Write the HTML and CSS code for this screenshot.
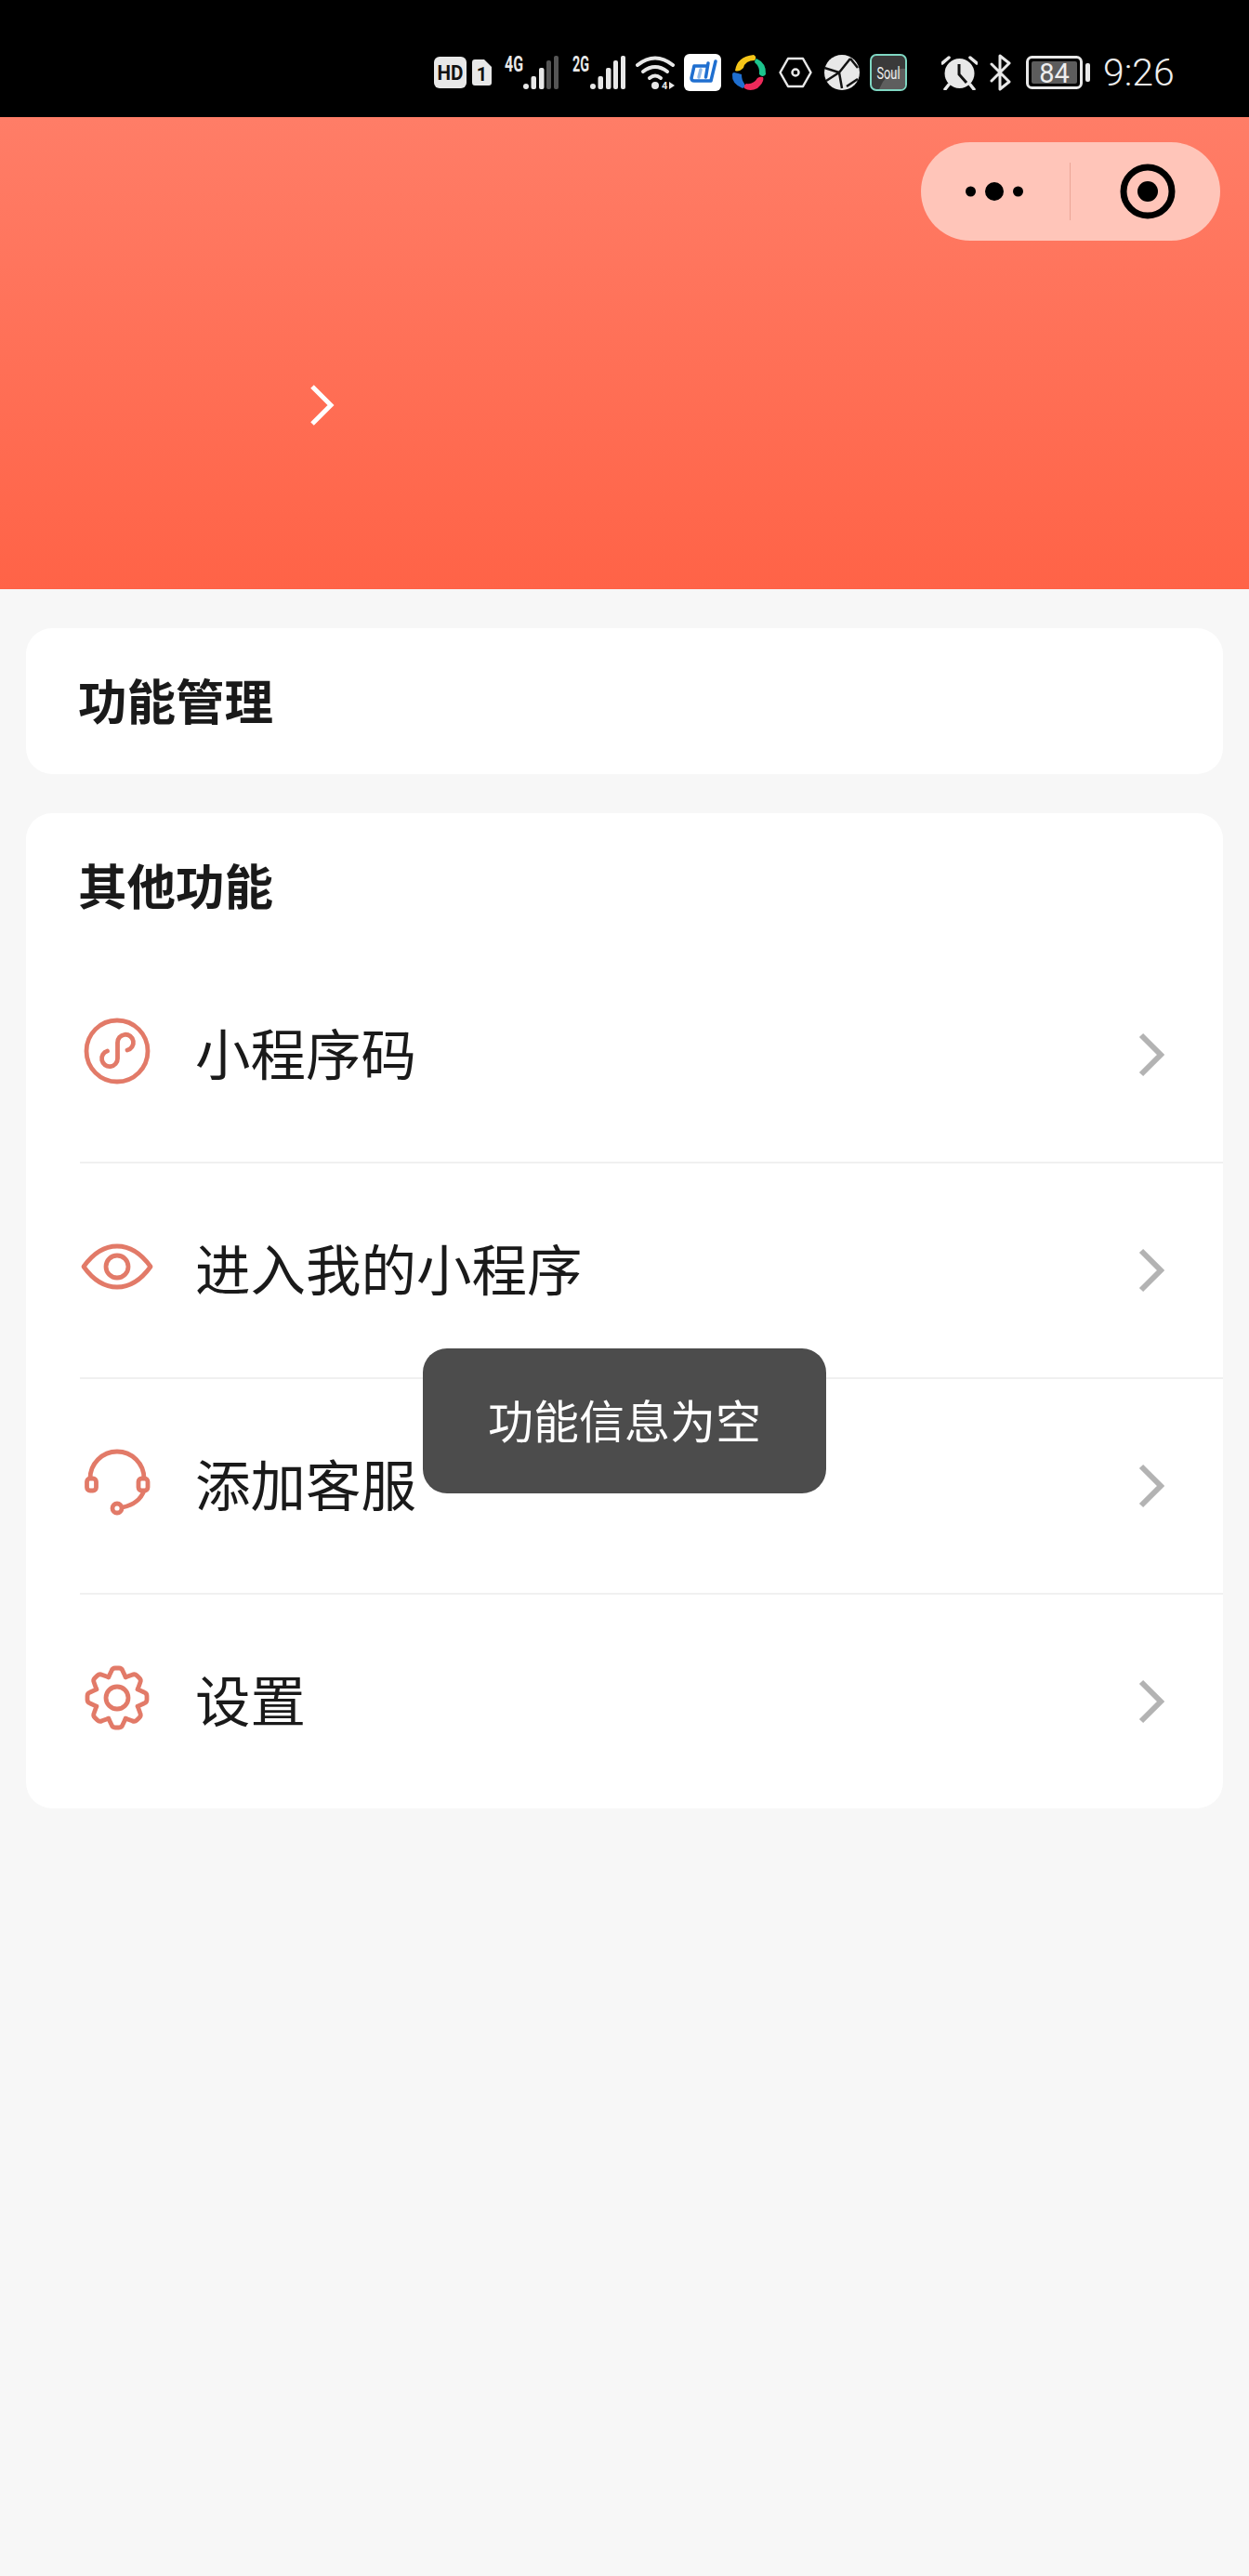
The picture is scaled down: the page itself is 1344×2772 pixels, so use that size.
FILE: index.html
```html
<!DOCTYPE html>
<html lang="zh-CN">

<head>
    <meta charset="UTF-8">
    <meta name="viewport" content="width=device-width, initial-scale=1.0">
    <title>我的</title>
    <link rel="stylesheet" href="styles.css">
</head>

<body>
    <div class="status-bar">
        <svg class="st st-hd" width="35" height="34" viewBox="0 0 35 34">
            <rect width="35" height="34" rx="6" fill="#e8e8e8" />
            <text x="17.500" y="25" text-anchor="middle" class="st-bold" font-size="22" textLength="28" lengthAdjust="spacingAndGlyphs" fill="#111">HD</text>
        </svg>
        <svg class="st st-sim" width="21" height="28" viewBox="0 0 21 28">
            <path d="M3 0h10l8 8v17a3 3 0 0 1-3 3H3a3 3 0 0 1-3-3V3a3 3 0 0 1 3-3z" fill="#e8e8e8" />
            <text x="10.500" y="23" text-anchor="middle" class="st-bold" font-size="20" fill="#111">1</text>
        </svg>
        <svg class="st st-sig" width="62" height="44" viewBox="-4 -8 62 44">
            <text x="0" y="17" class="st-bold" font-size="24" textLength="20" lengthAdjust="spacingAndGlyphs" fill="#e8e8e8">4G</text>
            <rect x="20" y="30" width="6" height="6" rx="3" fill="#e8e8e8" />
            <rect x="28.500" y="22" width="5.500" height="14" rx="2" fill="#e8e8e8" />
            <rect x="37" y="13" width="5.500" height="23" rx="2" fill="#e8e8e8" />
            <rect x="45" y="5" width="5" height="31" rx="2" fill="#555" />
            <rect x="53" y="0" width="5" height="36" rx="2" fill="#555" />
        </svg>
        <svg class="st st-sig2" width="61" height="44" viewBox="-4 -8 61 44">
            <text x="0" y="17" class="st-bold" font-size="24" textLength="18" lengthAdjust="spacingAndGlyphs" fill="#e8e8e8">2G</text>
            <rect x="19" y="30" width="6" height="6" rx="3" fill="#e8e8e8" />
            <rect x="27.500" y="22" width="5.500" height="14" rx="2" fill="#e8e8e8" />
            <rect x="36" y="13" width="5.500" height="23" rx="2" fill="#e8e8e8" />
            <rect x="44" y="5" width="5" height="31" rx="2" fill="#e8e8e8" />
            <rect x="52" y="0" width="5" height="36" rx="2" fill="#e8e8e8" />
        </svg>
        <svg class="st st-wifi" width="42" height="40" viewBox="0 0 42 40">
            <g fill="none" stroke="#e8e8e8" stroke-width="4" stroke-linecap="round">
                <path d="M2 10Q21-5 40 10" />
                <path d="M8 17Q21 7 34 17" />
                <path d="M15 24Q21 19 27 24" />
            </g>
            <circle cx="21" cy="32" r="4" fill="#e8e8e8" />
            <text x="28" y="36" class="st-bold" font-size="11" fill="#e8e8e8">4</text>
            <path d="M36 28l6 4-6 4z" fill="#e8e8e8" />
        </svg>
        <svg class="st st-app" width="40" height="40" viewBox="0 0 40 40">
            <rect width="40" height="40" rx="6" fill="#fff" />
            <path d="M18 17l-2 8" fill="none" stroke="#8fb8e8" stroke-width="3.500" stroke-linecap="round" />
            <path d="M11 13h13M11 13L8 26q0 3 3 3h18L34 8M26 10l-2.500 15" fill="none" stroke="#1f6fd0" stroke-width="3.500" stroke-linecap="round" stroke-linejoin="round" />
        </svg>
        <svg class="st st-ring" width="38" height="40" viewBox="0 0 38 40">
            <path d="M4 18Q6 3 24 1Q28 3 25 7Q15 7 13 15Q8 20 4 18Z" fill="#f5c518" />
            <path d="M27 5Q38 10 37 22Q34 26 30 22Q31 14 25 9Q25 6 27 5Z" fill="#1cc48d" />
            <path d="M34 25Q36 30 28 37Q20 41 14 37Q12 34 16 32Q24 33 28 26Q31 24 34 25Z" fill="#ee2a5a" />
            <path d="M3 20Q8 21 11 22Q11 28 14 32Q15 36 12 37Q0 32 1 22Q1 20 3 20Z" fill="#1f6fd0" />
        </svg>
        <svg class="st st-hex" width="36" height="34" viewBox="0 0 36 34">
            <path d="M10 2h16l8.500 15L26 32H10L1.500 17z" fill="none" stroke="#e8e8e8" stroke-width="2.500" stroke-linejoin="round" />
            <circle cx="18" cy="17" r="3.500" fill="none" stroke="#e8e8e8" stroke-width="2.500" />
        </svg>
        <svg class="st st-globe" width="38" height="38" viewBox="0 0 38 38">
            <circle cx="19" cy="19" r="19" fill="#e8e8e8" />
            <path d="M0 14l16 5 3 17M16 19L28 4M16 19L2 28M28 4l8 10M24 34l12-8" fill="none" stroke="#111" stroke-width="2.500" />
        </svg>
        <svg class="st st-soul" width="40" height="40" viewBox="0 0 40 40">
            <rect x="1" y="1" width="38" height="38" rx="6" fill="#3a3a3a" stroke="#7fd6c2" stroke-width="2" />
            <path d="M14 30Q26 14 38 16V33q0 5-5 5H10z" fill="#5e5e5e" />
            <text x="20" y="27" text-anchor="middle" class="st-text" font-size="19" textLength="25" lengthAdjust="spacingAndGlyphs" fill="#eee">Soul</text>
        </svg>
        <svg class="st st-alarm" width="39" height="38" viewBox="0 0 39 38">
            <circle cx="19.500" cy="20" r="16" fill="#e8e8e8" />
            <path d="M19 10v11l8 9" fill="none" stroke="#111" stroke-width="3" />
            <path d="M1 9l7-6M38 9l-7-6M8 32l-4 5M31 32l4 5" fill="none" stroke="#e8e8e8" stroke-width="3.500" stroke-linecap="round" />
        </svg>
        <svg class="st st-bt" width="23" height="40" viewBox="0 0 23 40">
            <path d="M2 11l19 19-10 8V2l10 8L2 29" fill="none" stroke="#e8e8e8" stroke-width="3" stroke-linecap="round" stroke-linejoin="round" />
        </svg>
        <svg class="st st-batt" width="69" height="36" viewBox="0 0 69 36">
            <rect x="1.500" y="1.500" width="58" height="33" rx="5" fill="none" stroke="#e8e8e8" stroke-width="3" />
            <rect x="6" y="6" width="49" height="24" rx="2" fill="#5c5c5c" />
            <rect x="64" y="8" width="5" height="20" rx="2" fill="#e8e8e8" />
            <text x="30.500" y="29" text-anchor="middle" class="st-text" font-size="29" fill="#eee">84</text>
        </svg>
        <div class="clock">9:26</div>
    </div>

    <header class="banner">
        <svg class="banner-arrow" width="28" height="46" viewBox="0 0 28 46">
            <path d="M4 3l20 20L4 43" fill="none" stroke="#fff" stroke-width="5" />
        </svg>
        <!-- top right capsule -->
        <div class="capsule">
            <div class="capsule-side capsule-more">
                <svg width="62" height="22" viewBox="0 0 62 22">
                    <circle cx="5.500" cy="11" r="5.500" />
                    <circle cx="31" cy="11" r="10" />
                    <circle cx="56.500" cy="11" r="5.500" />
                </svg>
            </div>
            <div class="capsule-side capsule-close">
                <svg width="60" height="60" viewBox="0 0 60 60">
                    <circle cx="30" cy="30" r="26" fill="none" stroke="#000" stroke-width="7" />
                    <circle cx="30" cy="30" r="11" />
                </svg>
            </div>
        </div>
    </header>

    <main class="content">
        <section class="card card-single">
            <h2 class="card-title">功能管理</h2>
        </section>

        <section class="card">
            <h2 class="card-title card-title-top">其他功能</h2>

            <div class="row">
                <svg class="row-icon" width="80" height="80" viewBox="0 0 80 80">
                    <circle cx="40" cy="40" r="33" />
                    <path d="M51 39a8.500 8.500 0 1 0-10.500-8v17a8.500 8.500 0 1 1-11-8" stroke-linecap="round" />
                </svg>
                <span class="row-name">小程序码</span>
                <svg class="row-arrow" width="28" height="48" viewBox="0 0 28 48">
                    <path d="M3 3l21 21L3 45" />
                </svg>
            </div>

            <div class="row">
                <svg class="row-icon" width="80" height="80" viewBox="0 0 80 80">
                    <path d="M4 40C14 26 26 18 40 18S66 26 76 40C66 54 54 62 40 62S14 54 4 40Z" stroke-linejoin="round" />
                    <circle cx="40" cy="40" r="12" />
                </svg>
                <span class="row-name">进入我的小程序</span>
                <svg class="row-arrow" width="28" height="48" viewBox="0 0 28 48">
                    <path d="M3 3l21 21L3 45" />
                </svg>
            </div>

            <div class="row">
                <svg class="row-icon" width="80" height="80" viewBox="0 0 80 80">
                    <path d="M11 36A29 29 0 0 1 69 36" />
                    <rect x="7.500" y="36" width="10" height="13" rx="3.500" />
                    <rect x="63" y="36" width="10" height="13" rx="3.500" />
                    <path d="M69 49Q64 63 46 67" />
                    <circle cx="40" cy="68" r="5" />
                </svg>
                <span class="row-name">添加客服</span>
                <svg class="row-arrow" width="28" height="48" viewBox="0 0 28 48">
                    <path d="M3 3l21 21L3 45" />
                </svg>
            </div>

            <div class="row">
                <svg class="row-icon" width="80" height="80" viewBox="0 0 80 80">
                    <!-- one tooth, repeated round the wheel -->
                    <path id="gear-tooth" d="M30.800 17.800L34 11Q35 8 38 8H42Q45 8 46 11L49.200 17.800" stroke-linejoin="round" stroke-linecap="round" />
                    <use href="#gear-tooth" transform="rotate(45 40 40)" />
                    <use href="#gear-tooth" transform="rotate(90 40 40)" />
                    <use href="#gear-tooth" transform="rotate(135 40 40)" />
                    <use href="#gear-tooth" transform="rotate(180 40 40)" />
                    <use href="#gear-tooth" transform="rotate(225 40 40)" />
                    <use href="#gear-tooth" transform="rotate(270 40 40)" />
                    <use href="#gear-tooth" transform="rotate(315 40 40)" />
                    <circle cx="40" cy="40" r="12" />
                </svg>
                <span class="row-name">设置</span>
                <svg class="row-arrow" width="28" height="48" viewBox="0 0 28 48">
                    <path d="M3 3l21 21L3 45" />
                </svg>
            </div>
        </section>
    </main>

    <div class="toast">功能信息为空</div>
</body>

</html>
```

FILE: styles.css
```css
:root {
    --bg-color: #f7f7f7;
    --text-color: #1a1a1a;
    --icon-color: #e27a68;
    --line-color: #f0f0f0;
}

* {
    box-sizing: border-box;
}

body {
    margin: 0;
    min-height: 2772px;
    position: relative;
    background-color: var(--bg-color);
    color: var(--text-color);
    font-family: "Noto Sans CJK SC", "Noto Sans", sans-serif;
}

/* status bar */
.status-bar {
    display: flex;
    align-items: center;
    height: 126px;
    padding: 30px 0 0 467px;
    background-color: #000;
}

.st {
    flex: none;
    display: block;
}

.st-bold {
    font-family: "Roboto", sans-serif;
    font-weight: 700;
}

.st-text {
    font-family: "Roboto", sans-serif;
    font-weight: 400;
}

.st-sim { margin-left: 6px; }
.st-sig { margin: -8px 0 0 10px; }
.st-sig2 { margin: -8px 0 0 11px; }
.st-wifi { margin: 0 0 -4px 11px; }
.st-app { margin-left: 10px; }
.st-ring { margin-left: 11px; }
.st-hex { margin-left: 13px; }
.st-globe { margin-left: 13px; }
.st-soul { margin-left: 11px; }
.st-alarm { margin-left: 37px; }
.st-bt { margin-left: 13px; }
.st-batt { margin-left: 16px; }

.clock {
    margin-left: 14px;
    color: #eee;
    font-family: "Roboto", sans-serif;
    font-size: 41px;
    font-weight: 300;
    line-height: 46px;
}

/* orange banner */
.banner {
    position: relative;
    height: 508px;
    padding: 287px 0 0 332px;
    background: linear-gradient(180deg, #ff7d67 0%, #ff6347 100%);
}

.banner-arrow {
    display: block;
}

.capsule {
    position: absolute;
    top: 27px;
    left: 991px;
    display: flex;
    width: 322px;
    height: 106px;
    border-radius: 53px;
    background-color: #ffc5b9;
}

.capsule-side {
    display: flex;
    align-items: center;
    justify-content: center;
    height: 100%;
}

.capsule-more {
    width: 161px;
    position: relative;
}

/* thin line between the two buttons */
.capsule-more::after {
    content: "";
    position: absolute;
    top: 22px;
    right: 0;
    width: 1px;
    height: 62px;
    background-color: #eba596;
}

.capsule-more svg {
    transform: translateX(-2px);
}

.capsule-close {
    flex: 1;
    padding-left: 4px;
}

/* cards */
.content {
    padding: 42px 28px 0;
}

.card {
    margin-bottom: 42px;
    border-radius: 28px;
    background-color: #fff;
}

.card-single {
    height: 157px;
    display: flex;
    align-items: center;
}

.card-single .card-title {
    margin-top: -6px;
}

.card-title {
    margin: 0;
    padding-left: 56px;
    font-size: 52.500px;
    font-weight: 700;
    line-height: 52px;
}

.card-title-top {
    padding-top: 50px;
    padding-bottom: 41px;
}

.row {
    display: flex;
    align-items: center;
    height: 232px;
    margin-left: 58px;
    padding-right: 63px;
    border-top: 2px solid var(--line-color);
}

.row:first-of-type {
    border-top-color: transparent;
}

.row-icon {
    flex: none;
    margin-top: -8px;
    fill: none;
    stroke: var(--icon-color);
    stroke-width: 4.800;
}

.row-name {
    flex: 1;
    margin: -8px 0 0 44px;
    font-size: 59.500px;
    line-height: 80px;
}

.row-arrow {
    flex: none;
    fill: none;
    stroke: #b3b3b3;
    stroke-width: 6;
}

/* message shown over the page */
.toast {
    position: absolute;
    top: 1451px;
    left: 455px;
    width: 434px;
    height: 156px;
    border-radius: 26px;
    background-color: #4c4c4c;
    color: #fff;
    font-size: 49px;
    line-height: 152px;
    text-align: center;
}
```
